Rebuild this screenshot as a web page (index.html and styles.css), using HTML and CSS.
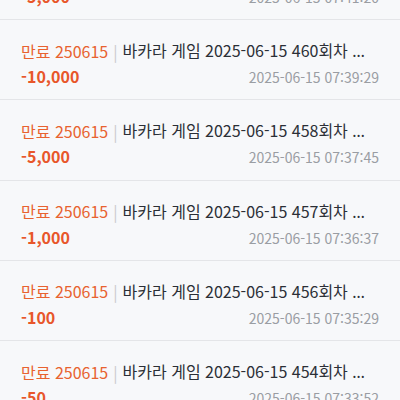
FILE: index.html
```html
<!DOCTYPE html>
<html lang="ko">
  <head>
    <meta charset="UTF-8" />
    <meta name="viewport" content="width=device-width, initial-scale=1.0" />
    <title>내역</title>
    <link rel="stylesheet" href="styles.css">
  </head>
  <body>
    <ul class="history">
      <li class="item">
        <div class="top">
          <span class="state">만료 250615</span><span class="bar">|</span><span class="title">바카라 게임 2025-06-15 461회차 <span class="more">…</span></span>
        </div>
        <div class="bottom">
          <span class="amount">-5,000</span>
          <span class="date">2025-06-15 07:41:20</span>
        </div>
      </li>
      <li class="item">
        <div class="top">
          <span class="state">만료 250615</span><span class="bar">|</span><span class="title">바카라 게임 2025-06-15 460회차 <span class="more">…</span></span>
        </div>
        <div class="bottom">
          <span class="amount">-10,000</span>
          <span class="date">2025-06-15 07:39:29</span>
        </div>
      </li>
      <li class="item">
        <div class="top">
          <span class="state">만료 250615</span><span class="bar">|</span><span class="title">바카라 게임 2025-06-15 458회차 <span class="more">…</span></span>
        </div>
        <div class="bottom">
          <span class="amount">-5,000</span>
          <span class="date">2025-06-15 07:37:45</span>
        </div>
      </li>
      <li class="item">
        <div class="top">
          <span class="state">만료 250615</span><span class="bar">|</span><span class="title">바카라 게임 2025-06-15 457회차 <span class="more">…</span></span>
        </div>
        <div class="bottom">
          <span class="amount">-1,000</span>
          <span class="date">2025-06-15 07:36:37</span>
        </div>
      </li>
      <li class="item">
        <div class="top">
          <span class="state">만료 250615</span><span class="bar">|</span><span class="title">바카라 게임 2025-06-15 456회차 <span class="more">…</span></span>
        </div>
        <div class="bottom">
          <span class="amount">-100</span>
          <span class="date">2025-06-15 07:35:29</span>
        </div>
      </li>
      <li class="item">
        <div class="top">
          <span class="state">만료 250615</span><span class="bar">|</span><span class="title">바카라 게임 2025-06-15 454회차 <span class="more">…</span></span>
        </div>
        <div class="bottom">
          <span class="amount">-50</span>
          <span class="date">2025-06-15 07:33:52</span>
        </div>
      </li>
    </ul>
  </body>
</html>
```

FILE: styles.css
```css
body {
  margin: 0;
  background-color: #f7f8fa;
  font-family: "Noto Sans CJK KR", "Noto Sans", sans-serif;
  overflow: hidden;
}

/* 스크롤된 상태: 첫 항목이 위로 잘려 보임 */
.history {
  list-style: none;
  margin: -60.25px 0 0;
  padding: 0;
}

.item {
  height: 80.25px;
  box-sizing: border-box;
  padding: 18px 21px 0 21px;
  border-bottom: 1px solid #e4e5e8;
}

.top {
  display: flex;
  align-items: center;
  font-size: 16px;
  line-height: 24px;
  white-space: nowrap;
}

.state {
  color: #e8622f;
  flex-shrink: 0;
}

.bar {
  color: #c9cacd;
  margin: 0 5px;
  flex-shrink: 0;
}

.title {
  color: #2b2f36;
  overflow: hidden;
}

/* 말줄임표는 글자 아래쪽에 붙는 라틴 폰트로 */
.more {
  font-family: "Noto Sans", sans-serif;
  letter-spacing: 1.5px;
}

.bottom {
  display: flex;
  justify-content: space-between;
  align-items: baseline;
  margin-top: 1px;
}

.amount {
  color: #e8562a;
  font-weight: bold;
  font-size: 16px;
  line-height: 24px;
}

.date {
  color: #9a9da3;
  font-size: 14px;
}
```
